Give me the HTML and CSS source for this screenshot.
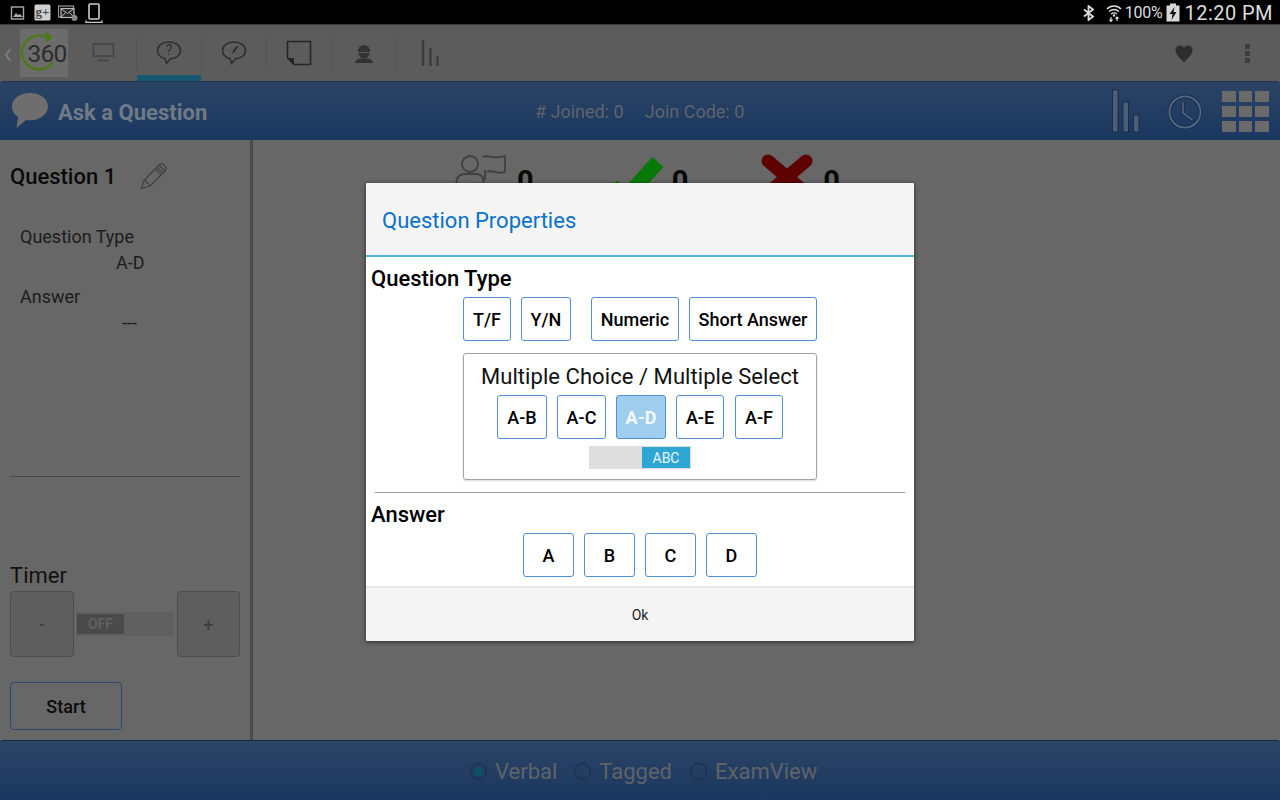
FILE: index.html
```html
<!DOCTYPE html>
<html lang="en">
<head>
<meta charset="utf-8">
<title>Question Properties</title>
<link rel="stylesheet" href="styles.css">
</head>
<body>
<div class="app">
  <div class="status">
    <div class="status-left">
      <svg width="15" height="16" viewBox="0 0 15 16"><rect x="1.500" y="2" width="12" height="12" fill="none" stroke="#aaa" stroke-width="1.400"/><path d="M3 12l3-4 2 2 2-1 3 3z" fill="#aaa"/></svg>
      <svg class="ic-g" width="17" height="17" viewBox="0 0 17 17"><rect x="0.500" y="0.500" width="16" height="16" rx="1.500" fill="#d0d0d0"/><text x="8.500" y="12" class="gplus">g+</text></svg>
      <svg width="20" height="18" viewBox="0 0 20 18"><rect x="0.500" y="2" width="15" height="11" fill="none" stroke="#999" stroke-width="1.200"/><rect x="3" y="4.500" width="13" height="9" fill="#222" stroke="#bbb" stroke-width="1.200"/><path d="M3 4.500l6.500 5 6.500-5M3 13.500l4.500-5M16 13.500l-4.500-5" fill="none" stroke="#bbb"/><circle cx="16.500" cy="14" r="3" fill="#888"/></svg>
      <svg width="18" height="20" viewBox="0 0 18 20"><rect x="4" y="1" width="10" height="15" rx="1" fill="none" stroke="#ccc" stroke-width="1.600"/><path d="M1 17.500v2h16v-2" fill="none" stroke="#ccc" stroke-width="1.400"/></svg>
    </div>
    <div class="status-right">
      <svg width="12" height="16" viewBox="0 0 12 16"><path d="M1 4.500l9 7-4.500 3.500V1L10 4.500l-9 7" fill="none" stroke="#ddd" stroke-width="1.800"/></svg>
      <svg class="wifi" width="16" height="18" viewBox="0 0 16 18"><path d="M1 5c4-4 10-4 14 0M3 7.500c3-2.500 7-2.500 10 0M5 10c2-1.500 4-1.500 6 0" fill="none" stroke="#ddd" stroke-width="1.400"/><circle cx="8" cy="11.500" r="1.200" fill="#ddd"/><path d="M5 13v4M3.500 15.500L5 17.500l1.500-2M11 17v-4M9.500 14.500L11 13l1.500 1.500" fill="none" stroke="#ddd" stroke-width="1.200"/></svg>
      <span class="pct">100%</span>
      <svg class="batt" width="14" height="19" viewBox="0 0 14 19"><path d="M4 0.500h6v2h3.500v16H0.500v-16H4z" fill="#d8d8d8"/><path d="M8.500 4L3.500 11h3l-1 6 5-8h-3z" fill="#111"/></svg>
      <span class="clock">12:20 PM</span>
    </div>
  </div>

  <div class="toolbar">
    <svg class="chev" width="8" height="14" viewBox="0 0 8 14"><path d="M6.500 1L2 7l4.500 6" fill="none" stroke="#7c7c7c" stroke-width="2"/></svg>
    <div class="logo">
      <svg width="48" height="48" viewBox="0 0 48 48"><path d="M27 8.500A17 17 0 1 0 33 33" fill="none" stroke="#4d7a14" stroke-width="2.400"/><path d="M26 2.500l7 6-7 5.500z" fill="#4d7a14"/></svg>
      <span class="logo-text">360</span>
    </div>
    <div class="tab">
      <svg width="24" height="20" viewBox="0 0 24 20"><rect x="1.500" y="1" width="20" height="12" fill="none" stroke="#444" stroke-width="1.600"/><path d="M6 17.500h11" stroke="#444" stroke-width="1.800"/></svg>
    </div>
    <div class="tab tab-active">
      <svg width="26" height="26" viewBox="0 0 26 26"><path d="M13 2C6.500 2 1.500 5.700 1.500 10.500c0 4 3.500 7 7.500 8l1.500 5 4-4.800C20 18.500 24.500 15 24.500 10.500 24.500 5.700 19.500 2 13 2z" fill="none" stroke="#2e2e2e" stroke-width="1.500"/><text x="13" y="15" class="qmark">?</text></svg>
    </div>
    <div class="tab">
      <svg width="26" height="26" viewBox="0 0 26 26"><path d="M13 2C6.500 2 1.500 5.700 1.500 10.500c0 4 3.500 7 7.500 8l1.500 5 4-4.800C20 18.500 24.500 15 24.500 10.500 24.500 5.700 19.500 2 13 2z" fill="none" stroke="#2e2e2e" stroke-width="1.500"/><path d="M11 14l1-3.500 3.500-4.500 1.500 1-3.500 5z" fill="#2e2e2e"/></svg>
    </div>
    <div class="tab">
      <svg width="26" height="26" viewBox="0 0 26 26"><path d="M1.500 1.500h23v23H8L1.500 18z" fill="none" stroke="#262626" stroke-width="1.600"/><path d="M1.500 18H8v6.500z" fill="#262626"/></svg>
    </div>
    <div class="tab">
      <svg width="20" height="22" viewBox="0 0 20 22"><path d="M4 9a6 6 0 0 1 12 0v1H4z" fill="#333"/><path d="M4.500 11h11a5.500 5.500 0 0 1-11 0z" fill="#333"/><path d="M1 21c0-3 3-4 6-4.500h6c3 .5 6 1.500 6 4.500z" fill="#333"/></svg>
    </div>
    <div class="tab tab-last">
      <svg width="18" height="26" viewBox="0 0 18 26"><path d="M2 0v26M9.500 8v18M16.500 16v10" stroke="#3c3c3c" stroke-width="2.400"/></svg>
    </div>
    <div class="toolbar-right">
      <svg width="18" height="18" viewBox="0 0 18 18"><path d="M9 17.500C6 13.500 .5 10 .5 5.200 .5 2.500 2.500 .5 5 .5c1.800 0 3.200 1 4 2.500C9.800 1.500 11.200 .5 13 .5c2.500 0 4.500 2 4.500 4.700C17.500 10 12 13.500 9 17.500z" fill="#2e2e2e"/></svg>
      <div class="dots"><i></i><i></i><i></i></div>
    </div>
  </div>

  <div class="header">
    <svg class="bubble" width="38" height="38" viewBox="0 0 38 38"><path d="M19 1C9 1 1 6.500 1 14.500c0 4.500 2.500 8 6 10.500l-1.500 11L15 28c1.300.2 2.700.3 4 .3 10 0 18-6 18-13.800S29 1 19 1z" fill="#6e6e6e"/></svg>
    <span class="header-title">Ask a Question</span>
    <div class="header-mid"><span>#&nbsp;Joined: 0</span><span>Join Code: 0</span></div>
    <div class="header-icons">
      <svg class="ic-bars" width="28" height="44" viewBox="0 0 28 44"><g fill="#4c5e78" stroke="#1a2d47" stroke-width="1"><rect x="0.500" y="1" width="5.500" height="42"/><rect x="11" y="13" width="5.500" height="30"/><rect x="21.500" y="26" width="5.500" height="17"/></g></svg>
      <svg class="ic-clock" width="36" height="36" viewBox="0 0 36 36"><circle cx="18" cy="18" r="15.500" fill="none" stroke="#1a2d47" stroke-width="4"/><circle cx="18" cy="18" r="15.500" fill="none" stroke="#4f6685" stroke-width="2"/><path d="M16 7.500V19l10 7.500" fill="none" stroke="#1a2d47" stroke-width="3.400"/><path d="M16 8v11l9.500 7" fill="none" stroke="#4f6685" stroke-width="1.600"/></svg>
      <div class="grid-icon"><i></i><i></i><i></i><i></i><i></i><i></i><i></i><i></i><i></i></div>
    </div>
  </div>

  <div class="main">
    <aside class="side">
      <div class="q-title">
        <span>Question 1</span>
        <svg width="28" height="28" viewBox="0 0 28 28"><path d="M1.500 26.500l2.500-8L19 3c1.500-1.500 3.500-1.500 5 0l1 1c1.500 1.500 1.500 3.500 0 5L10 24zM4 18.500c2 0 2.500 1 2.500 2.500 2 0 3 1 3 3M17 5l6 6M19.500 3.500l5 5M15.500 7l5.500 5.500" fill="none" stroke="#3f3f3f" stroke-width="1.100"/></svg>
      </div>
      <div class="info">Question Type</div>
      <div class="info-val">A-D</div>
      <div class="info info-second">Answer</div>
      <div class="info-val info-dash">---</div>
      <hr class="side-rule">
      <div class="timer-label">Timer</div>
      <div class="timer">
        <div class="step">-</div>
        <div class="track"><span class="off">OFF</span></div>
        <div class="step">+</div>
      </div>
      <div class="start">Start</div>
    </aside>
    <section class="stats">
      <div class="stat stat-people">
        <svg width="52" height="34" viewBox="0 0 52 34"><circle cx="15" cy="12" r="8" fill="none" stroke="#3f3f3f" stroke-width="1.800"/><path d="M1.500 34v-5c0-4 4-7 8-7h12c4 0 7 3 7 7v5" fill="none" stroke="#3f3f3f" stroke-width="1.800"/><path d="M28 5c6-3 8 3 22-1v16c-8 3-12-3-18 0M30 18v10" fill="none" stroke="#3f3f3f" stroke-width="1.800"/></svg>
        <span class="zero">0</span>
      </div>
      <div class="stat stat-right">
        <svg width="56" height="44" viewBox="0 0 56 44"><path d="M3 32l13 12L49 8" fill="none" stroke="#067806" stroke-width="15" stroke-linejoin="round"/></svg>
        <span class="zero">0</span>
      </div>
      <div class="stat stat-wrong">
        <svg width="52" height="40" viewBox="0 0 52 40"><path d="M7 7l38 32M45 7L7 39" fill="none" stroke="#5f0000" stroke-width="13" stroke-linecap="round"/></svg>
        <span class="zero">0</span>
      </div>
    </section>
  </div>

  <div class="footer">
    <span class="radio radio-on"></span><span class="r-label">Verbal</span>
    <span class="radio"></span><span class="r-label r-label-wide">Tagged</span>
    <span class="radio"></span><span class="r-label">ExamView</span>
  </div>
</div>

<div class="dialog">
  <div class="d-title">Question Properties</div>
  <div class="d-body">
    <div class="d-head">Question Type</div>
    <div class="row row-types">
      <div class="btn b-tf">T/F</div>
      <div class="btn b-yn">Y/N</div>
      <div class="btn b-num">Numeric</div>
      <div class="btn b-short">Short Answer</div>
    </div>
    <div class="mc">
      <div class="mc-title">Multiple Choice / Multiple Select</div>
      <div class="row row-mc">
        <div class="btn b-c">A-B</div>
        <div class="btn b-c b-c2">A-C</div>
        <div class="btn b-c b-sel">A-D</div>
        <div class="btn b-c b-narrow">A-E</div>
        <div class="btn b-c b-narrow b-last">A-F</div>
      </div>
      <div class="abc"><span>ABC</span></div>
    </div>
    <hr class="d-rule">
    <div class="d-head d-head-answer">Answer</div>
    <div class="row row-ans">
      <div class="btn b-a">A</div>
      <div class="btn b-a">B</div>
      <div class="btn b-a">C</div>
      <div class="btn b-a">D</div>
    </div>
  </div>
  <div class="d-foot">Ok</div>
</div>
</body>
</html>
```

FILE: styles.css
```css
* { box-sizing: border-box; }
html, body { margin: 0; padding: 0; }
body { width: 1280px; height: 800px; overflow: hidden; font-family: Roboto, "Liberation Sans", sans-serif; background: #676767; position: relative; }
.app { display: flex; flex-direction: column; height: 800px; }

.status { height: 24px; background: #000; display: flex; justify-content: space-between; align-items: center; padding: 1px 7px 0 10px; flex: none; }
.status-left { display: flex; align-items: center; gap: 7px; }
.status-left .ic-g { margin-left: 2px; }
.status-right { display: flex; align-items: center; }
.status-right .wifi { margin-left: 11px; }
.gplus { font: 700 13px "Liberation Serif", serif; fill: #444; text-anchor: middle; }
.qmark { font: 400 14px Roboto, sans-serif; fill: #2e2e2e; text-anchor: middle; }
.pct { font-size: 16px; color: #ddd; margin-left: 3px; letter-spacing: -.2px; }
.batt { margin-left: 3px; }
.clock { font-size: 20px; color: #ddd; margin-left: 5px; letter-spacing: .45px; }

.toolbar { height: 57px; flex: none; background: #5c5c5c; border-top: 1px solid #3a3a3a; display: flex; align-items: center; padding-left: 4px; }
.chev { flex: none; margin-right: 8px; margin-top: 3px; }
.logo { width: 48px; height: 48px; background: #6c6c6c; position: relative; flex: none; display: flex; align-items: center; justify-content: center; margin-right: 4px; }
.logo svg { position: absolute; left: 0; top: 0; }
.logo-text { position: relative; font-size: 24.500px; color: #2c2c2c; margin-left: 6px; letter-spacing: -.8px; }
.tab { width: 65px; height: 32px; flex: none; display: flex; align-items: center; justify-content: center; border-right: 1px solid #535353; position: relative; }
.tab-active::after { content: ""; position: absolute; left: 0; right: 0; bottom: -12px; height: 6px; background: #155870; }
.tab-last { border-right: 0; }
.toolbar-right { margin-left: auto; display: flex; align-items: center; gap: 52px; padding-right: 30px; }
.toolbar-right svg { margin-top: 2px; }
.dots { display: flex; flex-direction: column; gap: 2px; }
.dots i { width: 5px; height: 5px; background: #3d3d3d; display: block; }

.header { height: 59px; flex: none; background: linear-gradient(#2b4464, #1a3760); border-top: 1px solid #20344f; border-radius: 3px 3px 0 0; display: flex; align-items: center; padding-left: 11px; position: relative; }
.bubble { flex: none; }
.header-title { font-size: 22px; font-weight: 700; color: #6f7a87; margin: 2px 0 0 9px; }
.header-mid { position: absolute; left: 535px; top: 19px; display: flex; gap: 21px; font-size: 18px; color: #5e646d; }
.header-icons { margin-left: auto; display: flex; align-items: center; gap: 28px; padding-right: 11px; }
.ic-bars { margin-right: -1px; }
.ic-clock { margin: 2px -9px 0 0; }
.grid-icon { display: grid; grid-template-columns: 14px 13px 14px; grid-auto-rows: 11px; gap: 4px 3px; }
.grid-icon i { background: #6a6a6a; display: block; }

.main { flex: 1; display: flex; min-height: 0; }
.side { width: 253px; flex: none; border-right: 3px solid #4b4b4b; padding: 0 10px; display: flex; flex-direction: column; color: #141414; }
.q-title { display: flex; align-items: center; gap: 24px; height: 28px; margin-top: 22px; font-size: 22px; font-weight: 500; color: #0b0b0b; }
.info { font-size: 18px; margin: 36px 0 0 10px; line-height: 22px; color: #1c1c1c; }
.info-second { margin-top: 12px; }
.info-val { font-size: 18px; line-height: 22px; margin: 4px 0 0 106px; color: #1c1c1c; }
.info-dash { margin-left: 112px; }
.side-rule { width: 230px; border: 0; border-top: 1px solid #4a4a4a; margin: 142px 0 0; }
.timer-label { font-size: 22px; line-height: 26px; margin-top: 86px; color: #111; }
.timer { display: flex; align-items: center; margin-top: 2px; }
.step { width: 64px; height: 66px; border: 1px solid #4e4e4e; border-radius: 4px; background: #5e5e5e; display: flex; align-items: center; justify-content: center; font-size: 18px; font-weight: 500; color: #3f3f3f; flex: none; }
.track { width: 99px; height: 24px; margin: 0 3px 0 2px; background: #606060; padding: 2px 1px; display: flex; }
.step:last-child { width: 63px; }
.off { width: 47px; height: 20px; background: #4a4a4a; font-size: 14px; color: #636363; display: flex; align-items: center; justify-content: center; font-weight: 500; }
.start { width: 112px; height: 48px; margin-top: 25px; border: 1px solid #2c4a70; border-radius: 4px; display: flex; align-items: center; justify-content: center; font-size: 18px; font-weight: 500; color: #0c0c0c; }

.stats { flex: 1; display: flex; align-items: flex-start; padding: 12px 0 0 202px; }
.stat { display: flex; align-items: flex-start; }
.zero { font-size: 29px; font-weight: 700; color: #0a0a0a; margin: 12px 0 0 10px; line-height: 34px; }
.stat-right { margin-left: 75px; margin-top: 2px; }
.stat-right .zero { margin: 10px 0 0 7px; }
.stat-wrong { margin-left: 73px; margin-top: 2px; }
.stat-wrong .zero { margin-left: 10px; margin-top: 10px; }

.footer { height: 60px; flex: none; background: linear-gradient(#2c4565, #1a3760); border-top: 1px solid #13294a; border-radius: 3px 3px 0 0; display: flex; align-items: center; padding: 1px 0 0 470px; }
.radio { width: 17px; height: 17px; border-radius: 50%; border: 1px solid #1c2c42; flex: none; position: relative; }
.radio-on::after { content: ""; position: absolute; left: 3px; top: 3px; width: 9px; height: 9px; border-radius: 50%; background: #0d5266; }
.r-label { font-size: 22px; color: #5f6368; margin: 0 17px 0 8px; }
.r-label-wide { margin-right: 18px; }

.dialog { position: absolute; left: 366px; top: 183px; width: 548px; height: 458px; background: #fff; border-radius: 2px; box-shadow: 0 1px 4px rgba(0,0,0,.6); display: flex; flex-direction: column; }
.d-title { height: 74px; flex: none; background: #f5f5f5; border-bottom: 2px solid #4fb4e3; color: #0a72c8; font-size: 22px; padding: 2px 0 0 16px; display: flex; align-items: center; border-radius: 2px 2px 0 0; }
.d-body { flex: 1; display: flex; flex-direction: column; padding-top: 9px; position: relative; }
.d-head { font-size: 22px; font-weight: 500; color: #000; line-height: 26px; margin-left: 5px; }
.row { display: flex; }
.row-types { margin: 5px 0 0 97px; }
.btn { height: 44px; border: 1px solid #4f8fd4; border-radius: 3px; background: #fff; display: flex; align-items: center; justify-content: center; font-size: 18px; font-weight: 500; color: #000; flex: none; }
.b-tf { width: 48px; }
.b-yn { width: 50px; margin-left: 10px; }
.b-num { width: 88px; margin-left: 20px; }
.b-short { width: 128px; margin-left: 10px; }
.mc { width: 354px; height: 127px; margin: 12px 0 0 97px; border: 1px solid #a3a3a3; border-radius: 3px; box-shadow: 0 1px 2px rgba(0,0,0,.15); display: flex; flex-direction: column; align-items: center; }
.mc-title { font-size: 22px; color: #111; line-height: 27px; margin-top: 9px; letter-spacing: .06px; }
.row-mc { margin-top: 5px; gap: 10px; }
.b-c { width: 50px; }
.b-c2 { width: 49px; }
.b-narrow { width: 48px; }
.b-last { margin-left: 1px; }
.b-sel { background: #9fcdee; color: #f1f8fd; font-weight: 700; }
.abc { width: 102px; height: 23px; margin-top: 7px; background: #dedede; padding: 1px 1px 1px 53px; display: flex; }
.abc span { flex: 1; background: #2ea6d3; color: #e8f6fb; font-size: 14px; display: flex; align-items: center; justify-content: center; padding-top: 1px; }
.d-rule { width: 530px; margin: 12px 0 0 9px; border: 0; border-top: 1px solid #9e9e9e; }
.d-head-answer { margin-top: 9px; }
.row-ans { margin: 5px 0 0 157px; gap: 10px; }
.b-a { width: 51px; }
.d-foot { height: 55px; flex: none; background: #f5f5f5; border-top: 2px solid #e9e9e9; display: flex; align-items: center; justify-content: center; font-size: 14px; color: #222; border-radius: 0 0 2px 2px; }
```
